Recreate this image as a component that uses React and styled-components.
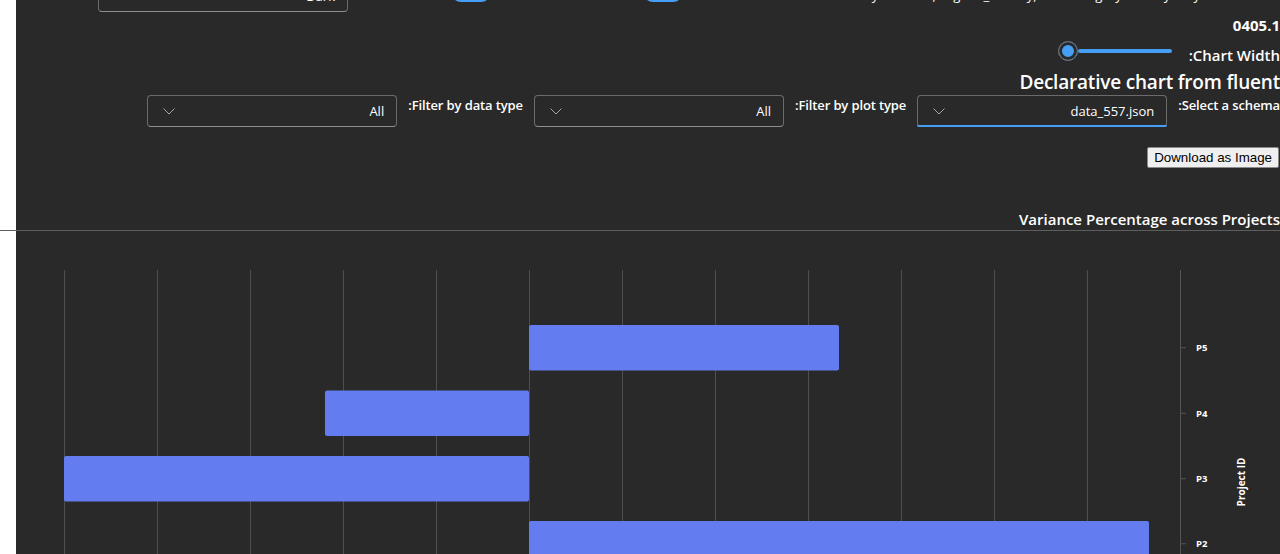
import React from "react";
import styled, { createGlobalStyle } from "styled-components";

const GlobalStyle = createGlobalStyle`
  html, body { margin: 0; padding: 0; background: #ffffff; overflow: hidden; }
  body { font-family: "Open Sans", "Noto Sans", sans-serif; }
  * { box-sizing: border-box; }
`;

const Page = styled.div`
  margin-left: 16px;
  height: 554px;
  background: #292929;
  color: #ffffff;
  direction: rtl;
  display: flex;
  flex-direction: column;
`;

const TopRow = styled.div`
  display: flex;
  align-items: flex-start;
  height: 32px;
  margin-top: -20px;
  padding-right: 80px;
  flex-shrink: 0;
`;

const TopCaption = styled.div`
  width: ${(p) => p.$w}px;
  margin-top: 5px;
  font-size: 13px;
  line-height: 20px;
  white-space: nowrap;
  overflow: hidden;
`;

const Switch = styled.div`
  width: 40px;
  height: 20px;
  margin-top: 2px;
  margin-left: ${(p) => p.$gap || 0}px;
  border-radius: 10px;
  background: #479ef5;
  flex-shrink: 0;
`;

const Dropdown = styled.div`
  position: relative;
  width: 250px;
  height: 32px;
  flex-shrink: 0;
  display: flex;
  align-items: center;
  justify-content: space-between;
  padding: 0 12px 0 15px;
  border: 1px solid #6b6b6b;
  border-bottom-color: #8f8f8f;
  border-radius: 4px;
  background: #292929;
  font-size: 13px;
  font-weight: 400;
  color: #ffffff;

  &::after {
    content: "";
    display: ${(p) => (p.$focused ? "block" : "none")};
    position: absolute;
    left: -1px;
    right: -1px;
    bottom: -1px;
    height: 2px;
    background: #479ef5;
    border-radius: 0 0 4px 4px;
  }
`;

const Chevron = () => (
  <svg width="12" height="7" viewBox="0 0 12 7" fill="none">
    <path d="M0.5 0.5 L6 6 L11.5 0.5" stroke="#a6a6a6" strokeWidth="1" />
  </svg>
);

const Version = styled.div`
  margin-top: 3px;
  font-size: 15px;
  line-height: 20px;
  font-weight: 700;
`;

const SliderRow = styled.div`
  display: flex;
  align-items: flex-start;
  gap: 17px;
  margin-top: 6px;
`;

const FieldLabel = styled.div`
  margin-top: ${(p) => p.$top || 0}px;
  font-size: ${(p) => p.$size || 13}px;
  line-height: 20px;
  font-weight: 600;
  letter-spacing: ${(p) => (p.$size ? 0 : -0.12)}px;
  white-space: nowrap;
`;

const Slider = styled.div`
  display: flex;
  align-items: center;
  height: 20px;
`;

const Rail = styled.div`
  width: 94px;
  height: 4px;
  border-radius: 2px;
  background: #479ef5;
`;

const Thumb = styled.div`
  width: 20px;
  height: 20px;
  border-radius: 50%;
  background: #479ef5;
  border: 1px solid #707070;
  box-shadow: inset 0 0 0 3px #292929;
`;

const Title = styled.h2`
  margin: 4px 0 0;
  font-size: 19px;
  line-height: 26px;
  font-weight: 600;
  letter-spacing: -0.2px;
`;

const ControlsRow = styled.div`
  display: flex;
  align-items: flex-start;
  gap: 11px;
`;

const ButtonRow = styled.div`
  display: flex;
  margin-top: 20px;
  padding-right: 1px;
`;

const DownloadButton = styled.button`
  height: 21px;
  padding: 1px 6px;
  font-family: "Liberation Sans", Arial, sans-serif;
  font-size: 13.33px;
  color: #000000;
  background: #efefef;
  border: 1px solid #8a8a8a;
  border-radius: 2px;
`;

const ChartTitle = styled.div`
  margin-top: 41px;
  font-size: 15px;
  line-height: 20px;
  font-weight: 600;
`;

const Divider = styled.div`
  margin: 1px 0 0 -16px;
  height: 1px;
  background: #5e5e5e;
  flex-shrink: 0;
`;

const ChartSvg = styled.svg`
  display: block;
  flex-shrink: 0;
  direction: ltr;
  font-family: "Open Sans", "Noto Sans", sans-serif;
`;

const gridXs = [64, 157, 250, 343, 436, 529, 622, 715, 808, 901, 994, 1087];
const bars = [
  { id: "P5", x0: 529, x1: 839, y: 325 },
  { id: "P4", x0: 325, x1: 529, y: 390.5 },
  { id: "P3", x0: 64, x1: 529, y: 456 },
  { id: "P2", x0: 529, x1: 1149, y: 521 },
];

const Chart = () => {
  const ox = 16;
  const oy = 231;
  const h = 340;
  return (
    <ChartSvg width="1264" height={h} viewBox={`0 0 1264 ${h}`}>
      {gridXs.map((x) => (
        <line key={x} x1={x - ox + 0.5} x2={x - ox + 0.5} y1={270 - oy} y2={h} stroke="#4e4e4e" strokeWidth="1" />
      ))}
      <line x1={1180.5 - ox} x2={1180.5 - ox} y1={270 - oy} y2={h} stroke="#555555" strokeWidth="1" />
      {bars.map((b) => (
        <g key={b.id}>
          <rect
            x={b.x0 - ox}
            y={b.y - oy}
            width={b.x1 - b.x0}
            height={45.5}
            rx="2"
            fill="#637cef"
          />
          <line x1={1180.5 - ox} x2={1186 - ox} y1={b.y + 22.75 - oy} y2={b.y + 22.75 - oy} stroke="#555555" />
          <text x={1196 - ox} y={b.y + 22.75 - oy + 3.5} fill="#ffffff" fontSize="9.5" fontWeight="700">
            {b.id}
          </text>
        </g>
      ))}
      <text
        transform={`translate(${1245 - ox}, ${482 - oy}) rotate(-90)`}
        textAnchor="middle"
        fill="#ffffff"
        fontSize="10"
        fontWeight="700"
      >
        Project ID
      </text>
    </ChartSvg>
  );
};

export default function App() {
  return (
    <>
      <GlobalStyle />
      <Page>
        <TopRow>
          <TopCaption $w={517}>Show y-axis title, Legend_overlay, hide category labels yearly</TopCaption>
          <Switch />
          <TopCaption $w={152}>Enable RTL</TopCaption>
          <Switch $gap={103} />
          <Dropdown>
            <span>Dark</span>
            <Chevron />
          </Dropdown>
        </TopRow>
        <Version>0405.1</Version>
        <SliderRow>
          <FieldLabel $top={4} $size={15}>Chart Width:</FieldLabel>
          <Slider>
            <Rail />
            <Thumb />
          </Slider>
        </SliderRow>
        <Title>Declarative chart from fluent</Title>
        <ControlsRow>
          <FieldLabel>Select a schema:</FieldLabel>
          <Dropdown $focused>
            <span>data_557.json</span>
            <Chevron />
          </Dropdown>
          <FieldLabel>Filter by plot type:</FieldLabel>
          <Dropdown>
            <span>All</span>
            <Chevron />
          </Dropdown>
          <FieldLabel>Filter by data type:</FieldLabel>
          <Dropdown>
            <span>All</span>
            <Chevron />
          </Dropdown>
        </ControlsRow>
        <ButtonRow>
          <DownloadButton>Download as Image</DownloadButton>
        </ButtonRow>
        <ChartTitle>Variance Percentage across Projects</ChartTitle>
        <Divider />
        <Chart />
      </Page>
    </>
  );
}
